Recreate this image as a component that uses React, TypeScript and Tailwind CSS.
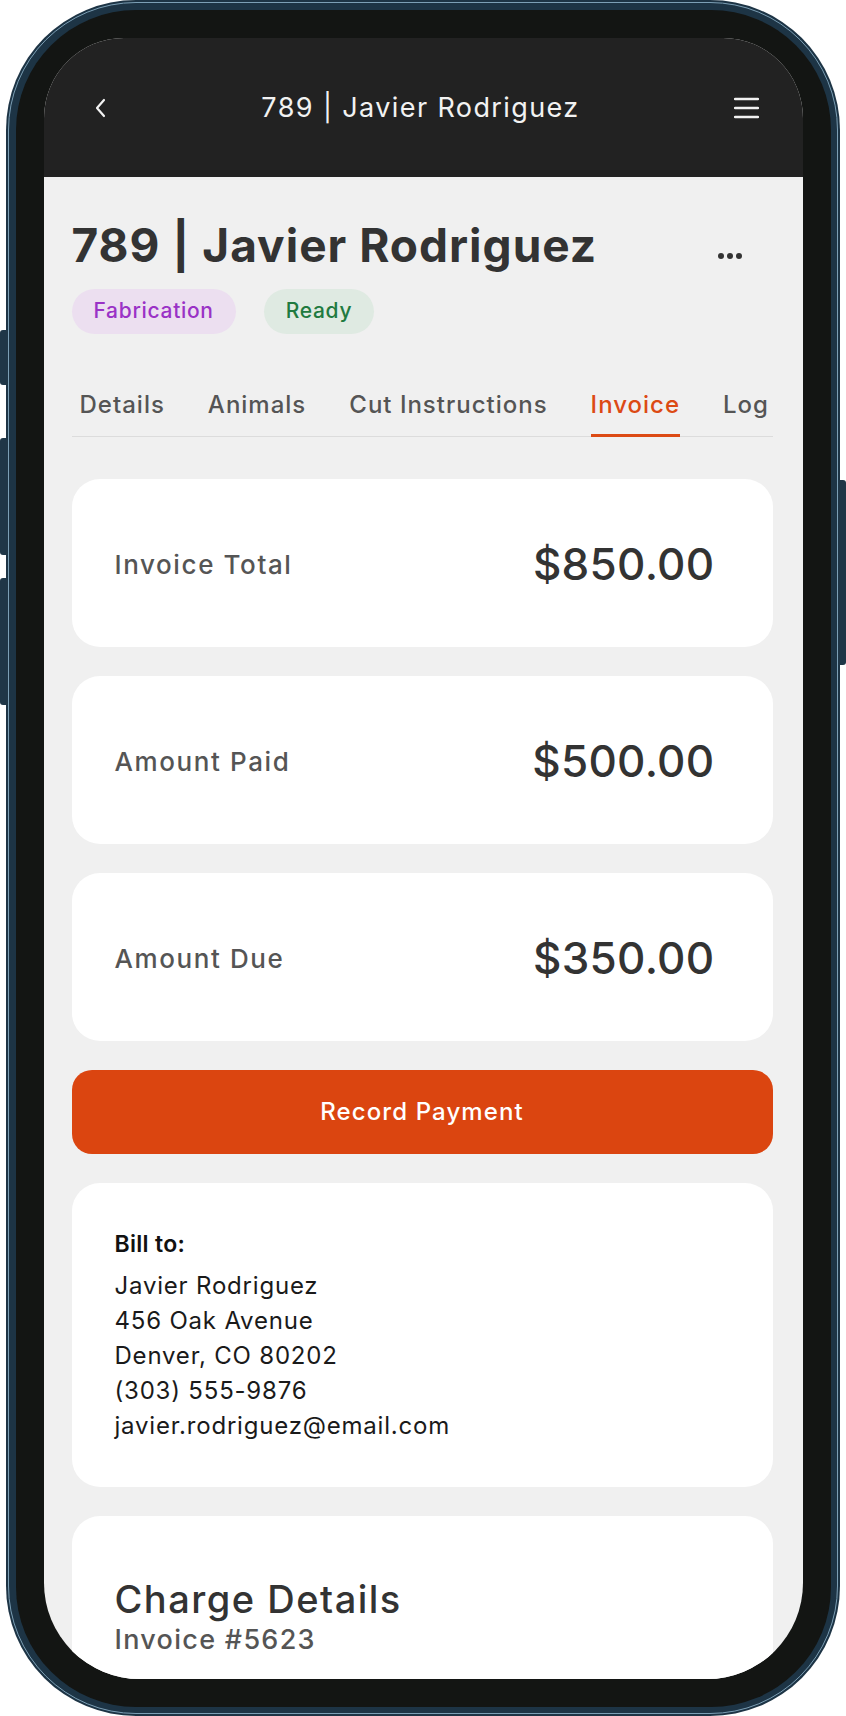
import React from 'react';

const tabs = ['Details', 'Animals', 'Cut Instructions', 'Invoice', 'Log'];

const totals = [
  { label: 'Invoice Total', value: '$850.00' },
  { label: 'Amount Paid', value: '$500.00' },
  { label: 'Amount Due', value: '$350.00' },
];

const billTo = [
  'Javier Rodriguez',
  '456 Oak Avenue',
  'Denver, CO 80202',
  '(303) 555-9876',
  'javier.rodriguez@email.com',
];

function TotalCard({ label, value }: { label: string; value: string }) {
  return (
    <div className="h-[168px] bg-white rounded-[28px] flex items-center justify-between pl-[43px] pr-[58px]">
      <span className="text-[26px] font-medium text-[#555555] tracking-[1.6px] mt-[3px]">{label}</span>
      <span className="text-[44px] font-medium text-[#333333] tracking-[0.3px] mt-[2px]">{value}</span>
    </div>
  );
}

export default function App() {
  return (
    <div
      className="w-[846px] h-[1716px] bg-white relative"
      style={{ fontFamily: 'Inter, "Noto Sans", sans-serif' }}
    >
      {/* side buttons */}
      <div className="absolute left-0 top-[330px] w-[8px] h-[55px] bg-[#1f3647] rounded-l-[3px]" />
      <div className="absolute left-0 top-[438px] w-[8px] h-[117px] bg-[#1f3647] rounded-l-[3px]" />
      <div className="absolute left-0 top-[578px] w-[8px] h-[127px] bg-[#1f3647] rounded-l-[3px]" />
      <div className="absolute right-0 top-[480px] w-[8px] h-[185px] bg-[#1f3647] rounded-r-[3px]" />

      <div className="ml-[6px] w-[834px] h-[1716px] bg-[#1d3445] rounded-[130px] p-[2px]">
        <div className="h-full rounded-[128px] border-[1.5px] border-[#7c9fb5] p-[6.5px] bg-[#1d3445]">
          <div className="h-full rounded-[120px] bg-[#131513] p-[28px]">
            <div className="h-full rounded-t-[80px] rounded-b-[96px] overflow-hidden bg-[#f0f0f0] flex flex-col">
              {/* app bar */}
              <div className="h-[139px] shrink-0 bg-[#222222] flex items-start justify-between pt-[56px] pl-[50px] pr-[44px]">
                <svg width="14" height="28" viewBox="0 0 14 28" fill="none">
                  <path d="M10 6L3 14L10 22" stroke="#f2f2f2" strokeWidth="2.2" strokeLinecap="round" strokeLinejoin="round" />
                </svg>
                <span className="text-[27px] leading-[28px] text-[#f2f2f2] tracking-[1.4px]">789 | Javier Rodriguez</span>
                <svg width="25" height="28" viewBox="0 0 25 28" fill="none">
                  <path d="M1 5H24M1 14H24M1 23H24" stroke="#f2f2f2" strokeWidth="2.4" strokeLinecap="round" />
                </svg>
              </div>

              {/* content */}
              <div className="flex-1 pl-[28px] pr-[30px]">
                <div className="flex items-center justify-between pt-[40px]">
                  <h1 className="text-[46px] leading-[56px] font-bold text-[#333333] tracking-[1px]">
                    789 | Javier Rodriguez
                  </h1>
                  <div className="flex gap-[3px] mr-[31px] mt-[22px]">
                    <span className="w-[6px] h-[6px] rounded-full bg-[#333333]" />
                    <span className="w-[6px] h-[6px] rounded-full bg-[#333333]" />
                    <span className="w-[6px] h-[6px] rounded-full bg-[#333333]" />
                  </div>
                </div>

                <div className="flex gap-[28px] mt-[16px]">
                  <span className="h-[45px] px-[22px] rounded-full bg-[#ecdff0] text-[#9a32c6] text-[21px] font-medium tracking-[0.7px] flex items-center">
                    Fabrication
                  </span>
                  <span className="h-[45px] px-[22px] rounded-full bg-[#dfeae2] text-[#217a40] text-[21px] font-medium tracking-[0.7px] flex items-center">
                    Ready
                  </span>
                </div>

                <div className="mt-[56px] border-b border-[#dcdcdc] flex gap-[43px] pl-[8px] whitespace-nowrap">
                  {tabs.map((t) => (
                    <div
                      key={t}
                      className={
                        t === 'Invoice'
                          ? 'text-[24px] leading-[30px] font-medium tracking-[1px] text-[#dc4a14] pb-[13px] border-b-[3px] border-[#dc4a14] -mb-px'
                          : 'text-[24px] leading-[30px] font-medium tracking-[1px] text-[#555555] pb-[16px]'
                      }
                    >
                      {t}
                    </div>
                  ))}
                </div>

                <div className="mt-[42px] flex flex-col gap-[29px]">
                  {totals.map((c) => (
                    <TotalCard key={c.label} label={c.label} value={c.value} />
                  ))}

                  <button className="h-[84px] w-full rounded-[20px] bg-[#db4510] text-white text-[24px] font-medium tracking-[1.1px]">
                    Record Payment
                  </button>

                  <div className="bg-white rounded-[28px] pl-[43px] pt-[47px] pb-[44px]">
                    <div className="text-[23px] leading-[28px] font-semibold text-[#111111] tracking-[0.3px]">Bill to:</div>
                    <div className="mt-[10px] text-[24px] leading-[35px] text-[#1a1a1a] tracking-[0.8px]">
                      {billTo.map((line) => (
                        <div key={line}>{line}</div>
                      ))}
                    </div>
                  </div>

                  <div className="bg-white rounded-[28px] pl-[43px] pt-[61px] h-[200px]">
                    <div className="text-[38px] leading-[44px] font-medium text-[#333333] tracking-[1.5px]">Charge Details</div>
                    <div className="text-[27px] leading-[34px] font-medium text-[#555555] tracking-[1.3px] mt-[2px]">Invoice #5623</div>
                  </div>
                </div>
              </div>
            </div>
          </div>
        </div>
      </div>
    </div>
  );
}
